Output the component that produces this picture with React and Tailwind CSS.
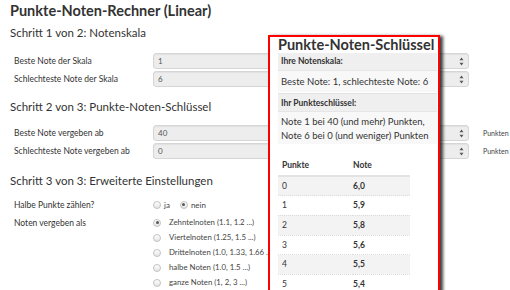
import React from 'react';

const font = { fontFamily: 'Lato, "Open Sans", "Liberation Sans", sans-serif' };
const headCl = 'h-[18px] leading-[18px] text-[11.5px] text-[#333]';
const labelCl = 'w-[143px] pl-[4px] text-[8.5px] text-[#333] leading-[16px]';

function Spinner() {
  return (
    <svg width="5" height="9" viewBox="0 0 5 9" className="absolute right-[4px] top-[3px]">
      <path d="M2.5 0.5 L4.5 3.2 L0.5 3.2 Z" fill="#555" />
      <path d="M2.5 8.5 L4.5 5.8 L0.5 5.8 Z" fill="#555" />
    </svg>
  );
}

function Field({ label, value, suffix }) {
  return (
    <div className="flex items-center h-[16px]">
      <div className={labelCl}>{label}</div>
      <div className="relative w-[316px] h-[16px] rounded-[3px] border border-[#d6d6d6] bg-[#ededed] shadow-[inset_0_1px_1px_rgba(0,0,0,0.05)]">
        <span className="absolute left-[4px] top-0 leading-[14px] text-[8px] text-[#555]">{value}</span>
        <Spinner />
      </div>
      {suffix && <span className="ml-[14px] text-[7px] text-[#444]">{suffix}</span>}
    </div>
  );
}

function Radio({ checked }) {
  return (
    <span className="inline-flex items-center justify-center w-[8px] h-[8px] rounded-full border border-[#c2c2c2] bg-gradient-to-b from-white to-[#e4e4e4] shrink-0">
      {checked && <span className="w-[3px] h-[3px] rounded-full bg-[#555]" />}
    </span>
  );
}

const noten = [
  ['Zehntelnoten (1.1, 1.2 ...)', true],
  ['Viertelnoten (1.25, 1.5 ...)', false],
  ['Drittelnoten (1.0, 1.33, 1.66 ...)', false],
  ['halbe Noten (1.0, 1.5 ...)', false],
  ['ganze Noten (1, 2, 3 ...)', false],
];

const tabelle = [
  ['0', '6,0'],
  ['1', '5,9'],
  ['2', '5,8'],
  ['3', '5,6'],
  ['4', '5,5'],
  ['5', '5,4'],
];

export default function App() {
  return (
    <div className="relative w-[510px] h-[290px] overflow-hidden bg-white text-[#333]" style={font}>
      {/* form */}
      <div className="pl-[10px]">
        <h1 className="h-[22px] leading-[22px] text-[14.5px] font-bold text-[#333]">Punkte-Noten-Rechner (Linear)</h1>
        <h2 className={`${headCl} mt-[2px]`}>Schritt 1 von 2: Notenskala</h2>
        <div className="mt-[11px] flex flex-col gap-[2px]">
          <Field label="Beste Note der Skala" value="1" />
          <Field label="Schlechteste Note der Skala" value="6" />
        </div>

        <h2 className={`${headCl} mt-[11px]`}>Schritt 2 von 3: Punkte-Noten-Schlüssel</h2>
        <div className="mt-[9px] flex flex-col gap-[2px]">
          <Field label="Beste Note vergeben ab" value="40" suffix="Punkten" />
          <Field label="Schlechteste Note vergeben ab" value="0" suffix="Punkten" />
        </div>

        <h2 className={`${headCl} mt-[13px]`}>Schritt 3 von 3: Erweiterte Einstellungen</h2>
        <div className="mt-[7px] flex items-center h-[15px]">
          <div className={`${labelCl} w-[141px]`}>Halbe Punkte zählen?</div>
          <div className="flex items-center text-[8px] text-[#444]">
            <Radio />
            <span className="ml-[3px]">ja</span>
            <span className="ml-[10px] flex"><Radio checked /></span>
            <span className="ml-[3px]">nein</span>
          </div>
        </div>
        <div className="mt-[3px] flex">
          <div className={`${labelCl} w-[141px] leading-[15px]`}>Noten vergeben als</div>
          <div className="flex flex-col">
            {noten.map(([t, c]) => (
              <div key={t} className="flex items-center h-[15px] text-[7.8px] text-[#444]">
                <Radio checked={c} />
                <span className="ml-[8px]">{t}</span>
              </div>
            ))}
          </div>
        </div>
      </div>

      {/* popup */}
      <div className="absolute left-[268px] top-[35px] w-[172px] h-[300px] border-2 border-[#ff0000] bg-white pl-[8px] pr-[1px] shadow-[3px_1px_3px_rgba(0,0,0,0.75)]">
        <div className="h-[16px] leading-[16px] text-[14.5px] font-bold text-[#333] whitespace-nowrap">Punkte-Noten-Schlüssel</div>
        <div className="h-[17px] leading-[17px] bg-[#efefef] px-[3px] text-[8.5px] font-bold">Ihre Notenskala:</div>
        <div className="h-[22px] leading-[22px] bg-[#f8f8f8] border-t border-[#e6e6e6] px-[3px] text-[9.5px]">Beste Note: 1, schlechteste Note: 6</div>
        <div className="h-[18px] leading-[18px] bg-[#efefef] border-t border-[#e2e2e2] mt-[1px] px-[3px] text-[8.5px] font-bold">Ihr Punkteschlüssel:</div>
        <div className="h-[33px] pt-[3px] bg-[#f8f8f8] border-t border-[#e6e6e6] px-[3px] text-[9.5px] leading-[14px]">
          <div>Note 1 bei 40 (und mehr) Punkten,</div>
          <div>Note 6 bei 0 (und weniger) Punkten</div>
        </div>
        <table className="mt-[12px] w-[132px] text-[8.5px] border-collapse">
          <thead>
            <tr className="h-[20px] border-b-2 border-[#e3e3e3]">
              <th className="text-left font-bold pl-[4px] w-[75px]">Punkte</th>
              <th className="text-left font-bold">Note</th>
            </tr>
          </thead>
          <tbody>
            {tabelle.map(([p, n], i) => (
              <tr key={p} className={`h-[19.7px] border-t border-dotted border-[#dcdcdc] ${i % 2 === 0 ? 'bg-[#f3f3f3]' : 'bg-white'}`}>
                <td className="pl-[4px]">{p}</td>
                <td className="font-bold">{n}</td>
              </tr>
            ))}
          </tbody>
        </table>
      </div>
    </div>
  );
}
